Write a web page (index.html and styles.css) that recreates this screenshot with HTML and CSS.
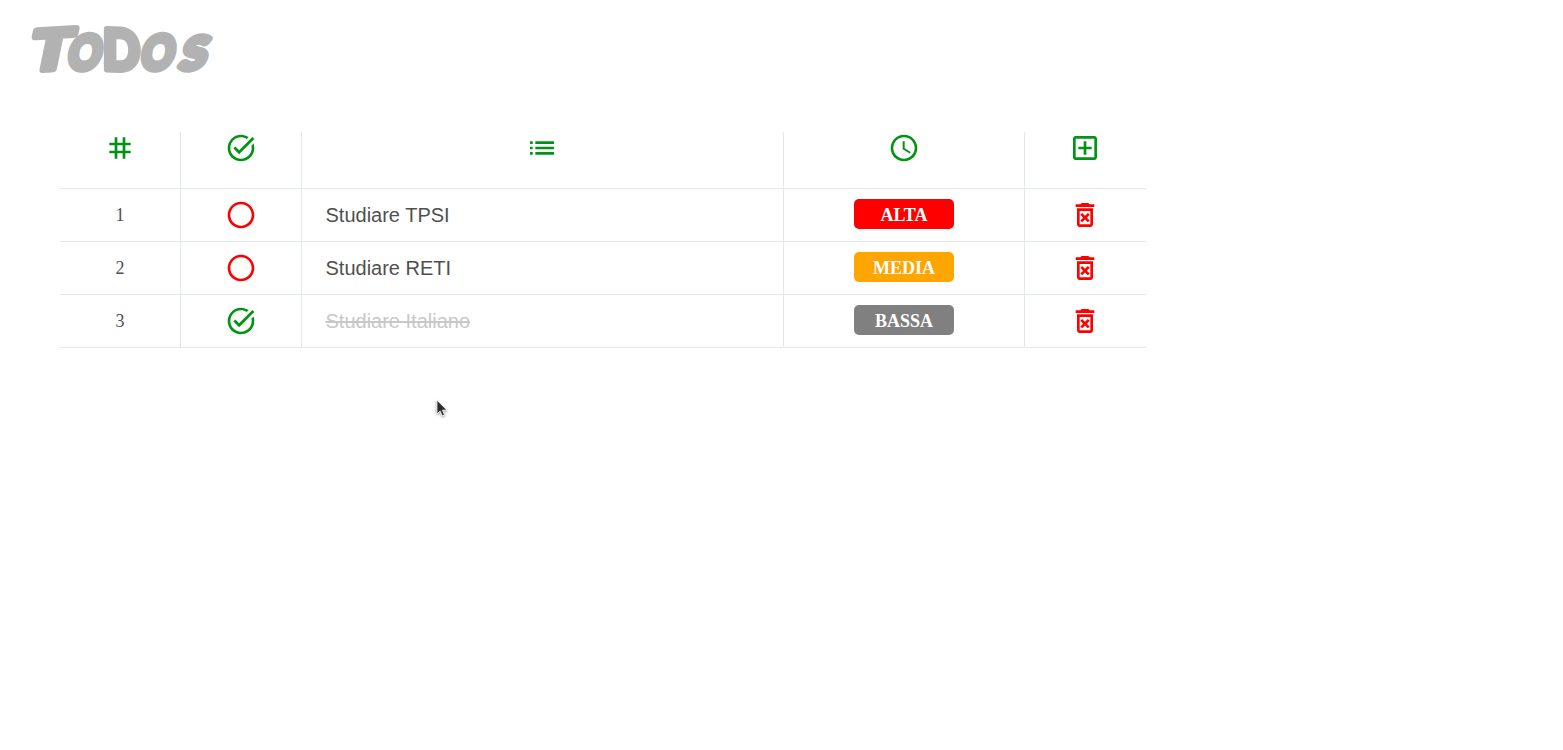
FILE: index.html
```html
<!DOCTYPE html>
<html lang="it">
<head>
<meta charset="utf-8">
<title>ToDos</title>
<link rel="stylesheet" href="styles.css">
</head>
<body>
<svg class="symbols" aria-hidden="true">
  <symbol id="tag" viewBox="0 0 24 24"><path d="M20 10V8h-4V4h-2v4h-4V4H8v4H4v2h4v4H4v2h4v4h2v-4h4v4h2v-4h4v-2h-4v-4h4zm-6 4h-4v-4h4v4z"/></symbol>
  <symbol id="done" viewBox="0 0 24 24"><path d="M22 5.18 10.59 16.6l-4.24-4.24 1.41-1.41 2.83 2.83 10-10L22 5.18zM19.79 10.22c.13.57.21 1.17.21 1.78 0 4.42-3.58 8-8 8s-8-3.58-8-8 3.58-8 8-8c1.58 0 3.04.46 4.28 1.25l1.44-1.44C16.1 2.67 14.13 2 12 2 6.48 2 2 6.48 2 12s4.48 10 10 10 10-4.48 10-10c0-1.19-.22-2.33-.6-3.39l-1.61 1.61z"/></symbol>
  <symbol id="open" viewBox="0 0 24 24"><path d="M12 2C6.48 2 2 6.48 2 12s4.48 10 10 10 10-4.48 10-10S17.52 2 12 2zm0 18c-4.42 0-8-3.58-8-8s3.58-8 8-8 8 3.58 8 8-3.58 8-8 8z"/></symbol>
  <symbol id="list" viewBox="0 0 24 24"><path d="M3 13h2v-2H3v2zm0 4h2v-2H3v2zm0-8h2V7H3v2zm4 4h14v-2H7v2zm0 4h14v-2H7v2zM7 7v2h14V7H7z"/></symbol>
  <symbol id="clock" viewBox="0 0 24 24"><path d="M11.99 2C6.47 2 2 6.48 2 12s4.47 10 9.99 10C17.52 22 22 17.52 22 12S17.52 2 11.99 2zM12 20c-4.42 0-8-3.58-8-8s3.58-8 8-8 8 3.58 8 8-3.58 8-8 8zm.5-13H11v6l5.25 3.15.75-1.23-4.5-2.67z"/></symbol>
  <symbol id="add" viewBox="0 0 24 24"><path d="M19 3H5c-1.11 0-2 .9-2 2v14c0 1.1.89 2 2 2h14c1.1 0 2-.9 2-2V5c0-1.1-.9-2-2-2zm0 16H5V5h14v14zm-8-2h2v-4h4v-2h-4V7h-2v4H7v2h4z"/></symbol>
  <symbol id="delete" viewBox="0 0 24 24"><path d="M14.12 10.47 12 12.59l-2.13-2.12-1.41 1.41L10.59 14l-2.12 2.12 1.41 1.41L12 15.41l2.12 2.12 1.41-1.41L13.41 14l2.12-2.12zM15.5 4l-1-1h-5l-1 1H5v2h14V4zM6 19c0 1.1.9 2 2 2h8c1.1 0 2-.9 2-2V7H6v12zM8 9h8v10H8V9z"/></symbol>
</svg>

<h1 class="title">
  <svg class="wordmark" viewBox="0 0 200 80" role="img" aria-label="ToDos">
    <text class="big" transform="matrix(1.2 -.07 -.2 .98 4 60.5)">T</text>
    <text class="small" transform="matrix(.86 -.06 -.14 .98 43 60)">o</text>
    <text class="big" transform="matrix(.86 .03 0 .98 79 59)">D</text>
    <text class="small" transform="matrix(.86 -.06 -.14 .98 116 60)">o</text>
    <text class="small" transform="matrix(1 -.08 -.25 .94 154 60)">s</text>
  </svg>
</h1>

<main class="todos">
  <div class="row head">
    <div class="cell"><svg class="icon green"><use href="#tag"/></svg></div>
    <div class="cell status"><svg class="icon green"><use href="#done"/></svg></div>
    <div class="cell wide"><svg class="icon green"><use href="#list"/></svg></div>
    <div class="cell"><svg class="icon green"><use href="#clock"/></svg></div>
    <div class="cell"><svg class="icon green"><use href="#add"/></svg></div>
  </div>
  <div class="row">
    <div class="cell number">1</div>
    <div class="cell status"><svg class="icon red"><use href="#open"/></svg></div>
    <div class="cell task">Studiare TPSI</div>
    <div class="cell"><span class="badge high">ALTA</span></div>
    <div class="cell"><svg class="icon red"><use href="#delete"/></svg></div>
  </div>
  <div class="row">
    <div class="cell number">2</div>
    <div class="cell status"><svg class="icon red"><use href="#open"/></svg></div>
    <div class="cell task">Studiare RETI</div>
    <div class="cell"><span class="badge medium">MEDIA</span></div>
    <div class="cell"><svg class="icon red"><use href="#delete"/></svg></div>
  </div>
  <div class="row">
    <div class="cell number">3</div>
    <div class="cell status"><svg class="icon green"><use href="#done"/></svg></div>
    <div class="cell task completed">Studiare Italiano</div>
    <div class="cell"><span class="badge low">BASSA</span></div>
    <div class="cell"><svg class="icon red"><use href="#delete"/></svg></div>
  </div>
</main>

<svg class="pointer" viewBox="0 0 16 22"><path d="M2 2v15l3.5-3.2L7.8 19l2.5-1.1L8 12.8h4.8z"/></svg>
</body>
</html>
```
FILE: styles.css
```css
* { box-sizing: border-box; }

body {
  margin: 0;
  background: #fff;
  color: #505050;
  font-family: "Liberation Serif", "Times New Roman", serif;
}

.symbols { display: none; }

.title {
  height: 132px;
  margin: 0;
  padding: 10px 0 0 24px;
}

.wordmark {
  display: block;
  width: 200px;
  height: 80px;
  overflow: visible;
  fill: #b2b2b2;
  stroke: #b2b2b2;
  stroke-width: 7px;
  stroke-linejoin: round;
  font-family: Lato, sans-serif;
  font-weight: 700;
  text-transform: uppercase;
}

.big { font-size: 56px; }
.small { font-size: 47px; }

.todos {
  width: 1086px;
  margin-left: 60px;
}

.row {
  display: grid;
  grid-template-columns: 121px 121px 482px 241px 121px;
  height: 53px;
  border-bottom: 1px solid #e3e9ea;
}

.row.head { height: 57px; }

.cell {
  display: flex;
  align-items: center;
  justify-content: center;
  border-right: 1px solid #e3e9ea;
}

.cell:last-child {
  padding-right: 1px;
  border-right: 0;
}

.head .cell { align-items: flex-start; }
.head .wide,
.status { padding-right: 1px; }

.icon {
  width: 32px;
  height: 32px;
  fill: currentColor;
}

.green { color: #009414; }
.red { color: #f00; }

.number { font-size: 18px; }

.task {
  justify-content: flex-start;
  padding-left: 23.5px;
  font-family: "Liberation Sans", Arial, sans-serif;
  font-size: 20px;
}

.completed {
  color: #c8c8c8;
  text-decoration: line-through;
}

.badge {
  width: 100px;
  height: 30px;
  margin-bottom: 2px;
  border-radius: 5px;
  color: #fff;
  font-size: 18px;
  font-weight: 700;
  line-height: 32px;
  text-align: center;
}

.high { background: #f00; }
.medium { background: #ffa500; }
.low { background: #808080; }

.pointer {
  position: absolute;
  left: 435px;
  top: 398px;
  width: 15px;
  height: 21px;
  fill: #2b2b2b;
  stroke: #fff;
  stroke-width: 1px;
  filter: drop-shadow(0 1px 1px rgba(0, 0, 0, .4));
}
```
